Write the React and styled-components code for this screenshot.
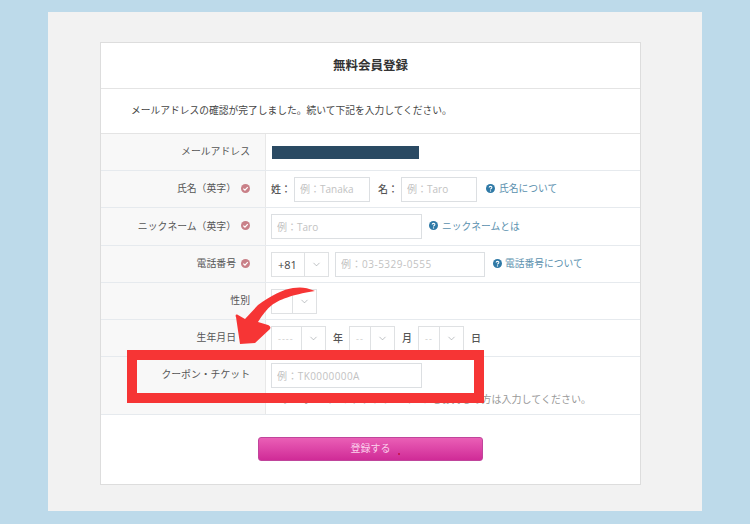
import React from 'react';
import styled, { createGlobalStyle } from 'styled-components';
import { ChevronDown } from 'lucide-react';

const GlobalStyle = createGlobalStyle`
  * { box-sizing: border-box; }
  html, body { margin: 0; padding: 0; }
  body {
    background: #bddaea;
    font-family: "Open Sans", "Noto Sans CJK JP", sans-serif;
    color: #444;
  }
`;

const Page = styled.div`
  position: relative;
  width: 750px;
  height: 524px;
  padding: 12px 48px 13px;
  overflow: hidden;
`;

const Panel = styled.div`
  height: 499px;
  background: #f2f2f2;
  padding: 30px 62px 27px 52px;
`;

const Card = styled.div`
  width: 541px;
  height: 443px;
  background: #fff;
  border: 1px solid #ddd;
  display: flex;
  flex-direction: column;
`;

const Title = styled.h1`
  margin: 0;
  height: 46px;
  padding-bottom: 2px;
  display: flex;
  align-items: center;
  justify-content: center;
  font-size: 12.5px;
  font-weight: 700;
  color: #333;
  border-bottom: 1px solid #e4e4e4;
`;

const Message = styled.p`
  margin: 0;
  height: 45px;
  padding: 0 0 3px 30px;
  display: flex;
  align-items: center;
  font-size: 9.75px;
  color: #444;
  border-bottom: 1px solid #e4e4e4;
`;

const Row = styled.div`
  display: flex;
  height: ${p => p.$h || 37}px;
  border-bottom: 1px solid #e6eaee;
`;

const Label = styled.div`
  width: 165px;
  flex: none;
  display: flex;
  align-items: ${p => (p.$top ? 'flex-start' : 'center')};
  justify-content: flex-end;
  gap: 5px;
  padding: ${p => (p.$top ? '10px' : '0')} ${p => p.$right || 15}px ${p => (p.$top ? '0' : '2px')} 0;
  background: #f8f8f8;
  border-right: 1px solid #e8e8e8;
  font-size: 9.85px;
  color: #555;
`;

const Field = styled.div`
  flex: 1;
  display: flex;
  align-items: center;
  padding-left: 5px;
  font-size: 10px;
`;

const CouponField = styled(Field)`
  flex-direction: column;
  align-items: flex-start;
  padding-top: 6px;
`;

const Redacted = styled.div`
  width: 147px;
  height: 13px;
  margin-left: 1px;
  background: #2a4a63;
`;

const Prefix = styled.span`
  margin: 0 3px 2px ${p => p.$left || 0}px;
  font-size: 10px;
  color: #555;
  font-weight: 500;
`;

const TextInput = styled.input`
  width: ${p => p.$w}px;
  height: 25px;
  margin-left: ${p => p.$left || 0}px;
  padding: 0 5px;
  border: 1px solid #dcdfe2;
  background: #fff;
  font-family: inherit;
  font-size: 10px;
  letter-spacing: ${p => p.$track || 0}px;
  outline: none;
  &::placeholder { color: #c2c2c2; opacity: 1; }
`;

const Select = styled.div`
  width: ${p => p.$w}px;
  height: 25px;
  display: flex;
  border: 1px solid #dfe1e3;
  background: #fff;
`;

const SelectValue = styled.div`
  flex: 1;
  display: flex;
  align-items: center;
  padding-left: 6px;
  font-size: ${p => (p.$muted ? 9 : 11)}px;
  letter-spacing: ${p => (p.$muted ? 1 : 0)}px;
  color: ${p => (p.$muted ? '#cbcbcb' : '#444')};
`;

const SelectArrow = styled.div`
  width: 24px;
  flex: none;
  display: flex;
  align-items: center;
  justify-content: center;
  border-left: 1px solid #dfe1e3;
  color: #8a8f94;
`;

const Unit = styled.span`
  margin: 0 6px 2px 7px;
  font-size: 10px;
  color: #555;
  font-weight: 500;
`;

const HelpLink = styled.a`
  display: flex;
  align-items: center;
  gap: ${p => p.$gap || 4}px;
  margin: 0 0 2px ${p => p.$left || 7}px;
  color: #5a90ae;
  font-size: 9.75px;
`;

const Note = styled.p`
  margin: 4px 0 0 1px;
  font-size: 10px;
  line-height: 14px;
  color: #999;
`;

const Footer = styled.div`
  flex: 1;
  display: flex;
  justify-content: center;
  padding: 22px 0 0 0;
`;

const SubmitButton = styled.button`
  position: relative;
  width: 225px;
  height: 24px;
  padding: 0 0 3px;
  border: 1px solid #c0459b;
  border-radius: 3px;
  background: linear-gradient(#ea5fb6, #d02b97);
  color: #fbd0ec;
  font-family: inherit;
  font-size: 10px;
`;

const Speck = styled.span`
  position: absolute;
  left: 139px;
  top: 15px;
  width: 2px;
  height: 2px;
  border-radius: 50%;
  background: #c5103f;
`;

const CouponMark = styled.div`
  position: absolute;
  left: 127px;
  top: 350px;
  width: 357px;
  height: 53px;
  border: 10px solid #f63535;
  pointer-events: none;
`;

const ArrowMark = styled.svg`
  position: absolute;
  left: 230px;
  top: 285px;
  pointer-events: none;
`;

const CheckBadge = () => (
  <svg width="9" height="9" viewBox="0 0 10 10">
    <circle cx="5" cy="5" r="5" fill="#c98088" />
    <path d="M2.6 5.1 4.4 6.9 7.5 3.5" fill="none" stroke="#fff" strokeWidth="1.4" />
  </svg>
);

const HelpBadge = () => (
  <svg width="9" height="9" viewBox="0 0 10 10">
    <circle cx="5" cy="5" r="5" fill="#2f79a6" />
    <path d="M3.5 3.9C3.6 2.2 6.6 2.3 6.5 3.9 6.5 5 5 4.9 5 6.1" fill="none" stroke="#fff" strokeWidth="1.2" />
    <circle cx="5" cy="7.7" r=".75" fill="#fff" />
  </svg>
);

const Dropdown = ({ w, value, muted }) => (
  <Select $w={w}>
    <SelectValue $muted={muted}>{value}</SelectValue>
    <SelectArrow>
      <ChevronDown size={11} strokeWidth={1.2} />
    </SelectArrow>
  </Select>
);

const App = () => (
  <Page>
    <GlobalStyle />
    <Panel>
      <Card>
        <Title>無料会員登録</Title>
        <Message>メールアドレスの確認が完了しました。続いて下記を入力してください。</Message>

        <Row>
          <Label>メールアドレス</Label>
          <Field><Redacted /></Field>
        </Row>

        <Row>
          <Label>氏名（英字）<CheckBadge /></Label>
          <Field>
            <Prefix>姓：</Prefix>
            <TextInput $w={76} placeholder="例：Tanaka" />
            <Prefix $left={8}>名：</Prefix>
            <TextInput $w={76} placeholder="例：Taro" />
            <HelpLink $left={9}><HelpBadge />氏名について</HelpLink>
          </Field>
        </Row>

        <Row $h={38}>
          <Label>ニックネーム（英字）<CheckBadge /></Label>
          <Field>
            <TextInput $w={151} placeholder="例：Taro" />
            <HelpLink><HelpBadge />ニックネームとは</HelpLink>
          </Field>
        </Row>

        <Row>
          <Label>電話番号<CheckBadge /></Label>
          <Field>
            <Dropdown w={58} value="+81" />
            <TextInput $w={150} $left={6} $track={0.5} placeholder="例：03-5329-0555" />
            <HelpLink $left={8} $gap={3}><HelpBadge />電話番号について</HelpLink>
          </Field>
        </Row>

        <Row>
          <Label>性別</Label>
          <Field><Dropdown w={46} value="" muted /></Field>
        </Row>

        <Row>
          <Label $right={29}>生年月日</Label>
          <Field>
            <Dropdown w={55} value="----" muted />
            <Unit>年</Unit>
            <Dropdown w={46} value="--" muted />
            <Unit>月</Unit>
            <Dropdown w={46} value="--" muted />
            <Unit>日</Unit>
          </Field>
        </Row>

        <Row $h={58}>
          <Label $top>クーポン・チケット</Label>
          <CouponField>
            <TextInput $w={151} $track={0.4} placeholder="例：TK0000000A" />
            <Note>※クーポンコード、チケットコードをお持ちの方は入力してください。</Note>
          </CouponField>
        </Row>

        <Footer>
          <SubmitButton type="button">登録する<Speck /></SubmitButton>
        </Footer>
      </Card>
    </Panel>

    <CouponMark />
    <ArrowMark width="90" height="65" viewBox="230 285 90 65">
      <path
        d="M315 291C306 287 300 287 293 288 284 289 270 296 258 305L245 319 238 315C236 314 235 315 236 317L240 344 255 343 270 329C271 327 270 326 268 325L258 322C262 315 267 309 272 305 279 300 290 295 315 291Z"
        fill="#f63535"
      />
    </ArrowMark>
  </Page>
);

export default App;
